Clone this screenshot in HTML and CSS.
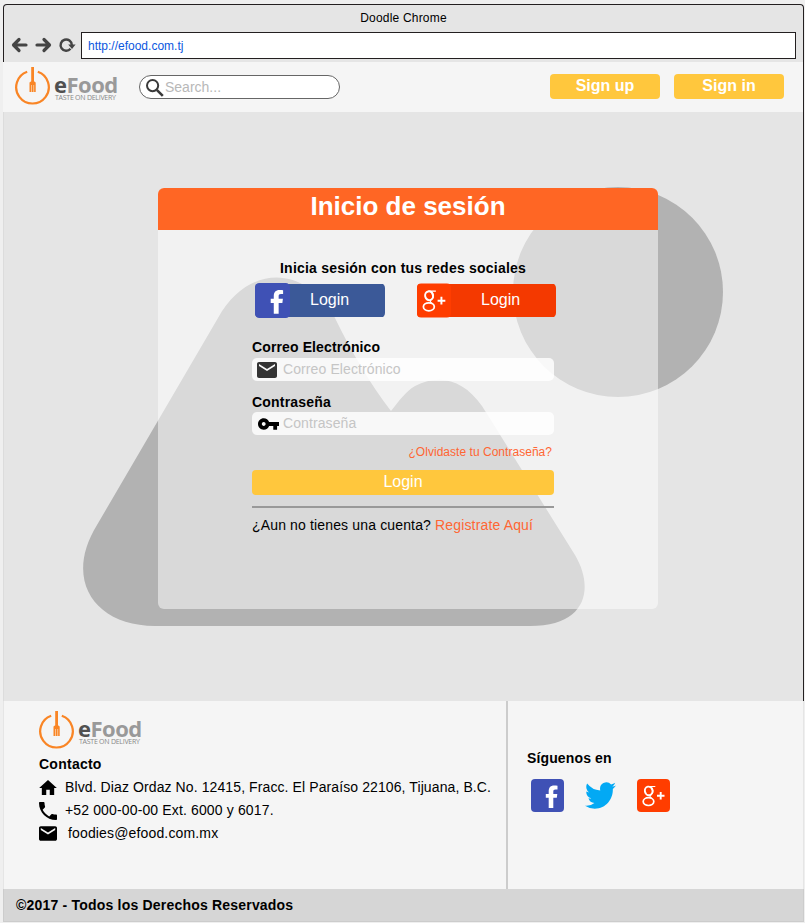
FILE: index.html
```html
<!DOCTYPE html>
<html lang="es">
<head>
<meta charset="utf-8">
<title>eFood</title>
<link rel="stylesheet" href="styles.css">
</head>
<body>
<svg class="defs" width="0" height="0">
  <symbol id="brand" viewBox="0 0 36 38">
    <path d="M12.200 4.800A16.300 16.300 0 1 0 22.800 4.800" fill="none" stroke="#f98525" stroke-width="2.200"/>
    <path d="M16.200 0h2.800v14.200l1.700 1.300v9.500h-6.200v-9.500l1.700-1.300z" fill="#f98525"/>
    <path d="M16.500 18v7M18.700 18v7" stroke="#fbdcc0" stroke-width=".7"/>
  </symbol>
  <symbol id="mail" viewBox="2 4 20 16">
    <path d="M20 4H4c-1.100 0-2 .9-2 2v12c0 1.100.9 2 2 2h16c1.100 0 2-.9 2-2V6c0-1.100-.9-2-2-2zm0 4-8 5-8-5V6l8 5 8-5z"/>
  </symbol>
  <symbol id="facebook" viewBox="0 0 33 33">
    <rect width="33" height="33" rx="4" fill="#3f51b5"/>
    <path d="M17.700 29V18.800h-2.900v-3.900h2.900v-2.400c0-4 1.900-6 5.300-6 1.300 0 2.600.1 3.500.3v3.600h-2c-1.700 0-2.200.7-2.200 2.100v2.400h4l-.5 3.900h-3.500V29z" fill="#fff"/>
  </symbol>
  <symbol id="gplus" viewBox="0 0 33 33">
    <rect width="33" height="33" rx="4" fill="#ff3d00"/>
    <g fill="none" stroke="#fff">
      <ellipse cx="11.700" cy="11.900" rx="3.800" ry="4.300" stroke-width="1.900" transform="rotate(-12 11.700 11.900)"/>
      <path d="M11 7.500h7.300M13.500 7.700c3 1.800 3.300 5.600.8 7.700-2 1.500-1.700 2.600.4 4.100" stroke-width="1.200"/>
      <ellipse cx="11.500" cy="22.600" rx="5.300" ry="3.900" stroke-width="1.700"/>
      <path d="M20 16.700h7.500M23.700 12.900v7.600" stroke-width="1.900"/>
    </g>
  </symbol>
</svg>
<div class="window">
  <div class="chrome">
    <div class="title">Doodle Chrome</div>
    <div class="nav">
      <svg class="nav-icons" width="66" height="18" viewBox="0 0 66 18" fill="none" stroke="#444" stroke-width="3.200" stroke-linecap="round" stroke-linejoin="round">
        <path d="M15 9H3M8 3.500 2.500 9 8 14.500M26 9h12M33 3.500 38.500 9 33 14.500"/>
        <path d="M59.500 12.700A5.600 5.600 0 1 1 60.800 9" stroke-width="2.400" stroke-linecap="butt"/>
        <path d="M57.200 8.500h7.400L61 12.900z" fill="#444" stroke="none"/>
      </svg>
      <div class="url">http://efood.com.tj</div>
    </div>
  </div>
  <header class="topbar">
    <div class="logo">
      <svg width="36" height="38"><use href="#brand"/></svg>
      <div class="wordmark"><div class="name"><span>e</span>Food</div><div class="tag">TASTE ON DELIVERY</div></div>
    </div>
    <div class="search">
      <svg width="18" height="18" viewBox="0 0 18 18" fill="none" stroke="#3a3a3a"><circle cx="6.600" cy="6.600" r="5.600" stroke-width="2"/><path d="m10.800 10.800 6 6" stroke-width="2.600"/></svg>
      <span>Search...</span>
    </div>
    <div class="signup">Sign up</div>
    <div class="signup signin">Sign in</div>
  </header>
  <main class="hero">
    <svg class="scene" width="800" height="589" viewBox="3 112 800 589" fill="#b2b2b2">
      <circle cx="618" cy="292" r="105"/>
      <path d="M155 626C95 626 63 580 97 525L218 318C248 264 305 264 335 318C352 353 371 385 391 411C400 400 405 392 415 386C440 373 464 380 482 406L575 555C594 587 588 626 530 626Z"/>
    </svg>
    <section class="panel">
      <h1>Inicio de sesión</h1>
      <form class="form">
        <h2>Inicia sesión con tus redes sociales</h2>
        <div class="social">
          <div class="social-btn fb"><svg width="35" height="35"><use href="#facebook"/></svg><span>Login</span></div>
          <div class="social-btn gp"><svg width="34" height="35"><use href="#gplus"/></svg><span>Login</span></div>
        </div>
        <label class="l-mail">Correo Electrónico</label>
        <div class="field"><svg class="f-mail" width="20" height="16"><use href="#mail"/></svg><span>Correo Electrónico</span></div>
        <label class="l-pass">Contraseña</label>
        <div class="field"><svg class="f-key" width="21" height="12" viewBox="1 6 22 12"><path d="M12.650 10C11.830 7.670 9.610 6 7 6c-3.310 0-6 2.690-6 6s2.690 6 6 6c2.610 0 4.830-1.670 5.650-4H17v4h4v-4h2v-4zM7 14c-1.100 0-2-.9-2-2s.9-2 2-2 2 .9 2 2-.9 2-2 2z"/></svg><span>Contraseña</span></div>
        <div class="forgot">¿Olvidaste tu Contraseña?</div>
        <div class="submit">Login</div>
        <div class="register">¿Aun no tienes una cuenta? <a>Registrate Aquí</a></div>
      </form>
    </section>
  </main>
  <footer>
    <div class="columns">
      <div class="contact">
        <div class="logo">
          <svg width="36" height="38"><use href="#brand"/></svg>
          <div class="wordmark"><div class="name"><span>e</span>Food</div><div class="tag">TASTE ON DELIVERY</div></div>
        </div>
        <h3>Contacto</h3>
        <div class="line"><svg width="18" height="15" viewBox="2 3 20 17"><path d="M10 20v-6h4v6h5v-8h3L12 3 2 12h3v8z"/></svg><span class="addr">Blvd. Diaz Ordaz No. 12415, Fracc. El Paraíso 22106, Tijuana, B.C.</span></div>
        <div class="line"><svg width="18" height="18" viewBox="3 3 18 18"><path d="M6.620 10.790c1.440 2.830 3.760 5.140 6.590 6.590l2.200-2.200c.27-.27.67-.36 1.020-.24 1.120.37 2.330.57 3.570.57.550 0 1 .45 1 1V20c0 .55-.45 1-1 1-9.390 0-17-7.610-17-17 0-.55.45-1 1-1h3.500c.55 0 1 .45 1 1 0 1.250.2 2.450.57 3.570.11.350.030.740-.25 1.020z"/></svg><span class="phone">+52 000-00-00 Ext. 6000 y 6017.</span></div>
        <div class="line"><svg width="18" height="15"><use href="#mail"/></svg><span class="email">foodies@efood.com.mx</span></div>
      </div>
      <div class="follow">
        <h3>Síguenos en</h3>
        <div class="icons">
          <svg width="33" height="33"><use href="#facebook"/></svg>
          <svg class="tw" width="31" height="27" viewBox="0 0 24 20" preserveAspectRatio="none"><path fill="#03a9f4" d="M24 2.560a9.800 9.800 0 0 1-2.830.78 4.900 4.900 0 0 0 2.160-2.720 9.800 9.800 0 0 1-3.120 1.190A4.920 4.920 0 0 0 11.820 6.300 13.970 13.970 0 0 1 1.670 1.150a4.920 4.920 0 0 0 1.520 6.570 4.900 4.900 0 0 1-2.230-.61v.06a4.920 4.920 0 0 0 3.950 4.830 4.900 4.900 0 0 1-2.220.08 4.930 4.930 0 0 0 4.600 3.420A9.870 9.870 0 0 1 0 17.540 13.940 13.940 0 0 0 7.550 19.750c9.140 0 14.310-7.720 13.990-14.640A10 10 0 0 0 24 2.560z"/></svg>
          <svg width="33" height="33"><use href="#gplus"/></svg>
        </div>
      </div>
    </div>
    <div class="copyright">©2017 - Todos los Derechos Reservados</div>
  </footer>
</div>
</body>
</html>
```
FILE: styles.css
```css
* { box-sizing: border-box; }
body { margin: 0; background: #efefef; font-family: "Liberation Sans", Arial, sans-serif; font-size: 14px; color: #000; }
svg { display: block; flex: none; }
.defs { position: absolute; }
h1, h2, h3 { margin: 0; font-size: 14px; font-weight: bold; }
.window { width: 802px; height: 919px; margin: 4px 0 0 3px; display: flex; flex-direction: column; }
.chrome { width: 801px; height: 58px; background: #e5e5e5; border: 1px solid #231f20; border-bottom: 0; border-radius: 4px 4px 0 0; }
.title { height: 27px; padding-top: 6px; line-height: 14px; font-size: 12px; text-align: center; letter-spacing: .2px; }
.nav { display: flex; }
.nav-icons { margin: 4px 4px 0 7px; }
.url { width: 715px; height: 27px; border: 1px solid #231f20; background: #fff; color: #0b57e0; font-size: 12px; line-height: 26px; padding-left: 6px; }
.topbar { width: 801px; height: 50px; background: #f5f5f5; border-right: 1px solid #231f20; display: flex; padding: 5px 0 0 12px; }
.logo { display: flex; width: 102px; height: 38px; }
.wordmark { margin: 6px 0 0 3px; white-space: nowrap; }
.name { height: 21px; font: bold 22px/22px "Open Sans", sans-serif; letter-spacing: -.5px; color: #999; }
.name span { color: #505050; }
.tag { margin-left: 1px; font: 7px/8px "Open Sans", sans-serif; color: #888; letter-spacing: -.26px; }
.search { display: flex; width: 201px; height: 24px; margin: 8px 210px 0 22px; padding: 3px 0 0 6px; border: 1px solid #666; border-radius: 12px; background: #fff; color: #b8b8b8; line-height: 17px; gap: 1px; }
.signup { width: 110px; height: 25px; margin-top: 7px; border-radius: 4px; background: #ffc73d; color: #fff; font-weight: bold; font-size: 16px; line-height: 24px; text-align: center; }
.signin { margin-left: 14px; }
.hero { width: 801px; height: 589px; background: #e5e5e5; border-right: 1px solid #231f20; border-left: 1px solid #dcdcdc; position: relative; padding: 76px 0 0 154px; }
.scene { position: absolute; left: -1px; top: 0; }
.panel { position: relative; width: 500px; height: 421px; background: rgba(255,255,255,.5); border-radius: 6px; overflow: hidden; }
.panel h1 { height: 42px; background: #ff6624; color: #fff; font-size: 26px; line-height: 37px; text-align: center; }
.form { width: 304px; margin-left: 94px; }
.form h2 { padding: 30px 0 0 28px; line-height: 16px; letter-spacing: .22px; white-space: nowrap; }
.social { display: flex; gap: 32px; padding: 7px 0 0 3px; }
.social-btn { display: flex; height: 35px; color: #fff; font-size: 16px; line-height: 33px; }
.fb { width: 130px; background: linear-gradient(#3b5998,#3b5998) 0 1px/100% 33px no-repeat; border-radius: 5px; }
.gp { width: 139px; background: linear-gradient(#f43900,#f43900) 0 1px/100% 33px no-repeat; border-radius: 5px; }
.fb span { margin-left: 20px; }
.gp span { margin-left: 30px; }
label { display: block; line-height: 16px; font-weight: bold; letter-spacing: .12px; }
.l-mail { margin-top: 21px; }
.l-pass { margin-top: 13px; letter-spacing: .2px; }
.field { display: flex; align-items: center; width: 302px; height: 23px; margin-top: 3px; padding-left: 5px; border-radius: 5px; background: rgba(255,255,255,.8); color: #c5c5c5; letter-spacing: .1px; }
.l-pass + .field { margin-top: 2px; }
.field span { margin: -2px 0 0 6px; }
.f-mail { fill: #333; }
.f-key { margin-left: 1px; }
.f-key + span { margin-left: 4px; }
.forgot { width: 300px; margin-top: 10px; line-height: 14px; font-size: 12px; color: #ff6633; text-align: right; letter-spacing: .03px; }
.submit { width: 302px; height: 25px; margin-top: 11px; border-radius: 4px; background: #ffc73d; color: #fff; font-size: 16px; line-height: 23px; text-align: center; }
.register { width: 302px; margin-top: 11px; border-top: 2px solid #999; padding-top: 9px; line-height: 16px; white-space: nowrap; letter-spacing: .15px; }
.register a { color: #ff6633; }
footer { width: 801px; }
.columns { display: flex; height: 188px; background: #f5f5f5; border-right: 1px solid #e5e5e5; }
.contact { width: 505px; border-right: 2px solid #ccc; border-left: 1px solid #e5e5e5; padding: 10px 0 0 35px; }
.contact h3 { margin: 7px 0 4px; line-height: 16px; letter-spacing: .25px; }
.line { display: flex; align-items: center; height: 23px; white-space: nowrap; }
.line span { margin: -2px 0 0 8px; letter-spacing: .1px; }
.line .phone { letter-spacing: .14px; }
.line .email { margin-left: 11px; letter-spacing: .15px; }
.follow { padding: 49px 0 0 19px; }
.follow h3 { line-height: 16px; letter-spacing: .13px; }
.icons { display: flex; align-items: center; padding: 13px 0 0 4px; }
.tw { margin: 0 21px 0 21px; }
.copyright { width: 801px; height: 33px; background: #d6d6d6; border: 1px solid #ccc; border-top: 0; padding-left: 12px; font-weight: bold; line-height: 32px; letter-spacing: .2px; }
```
